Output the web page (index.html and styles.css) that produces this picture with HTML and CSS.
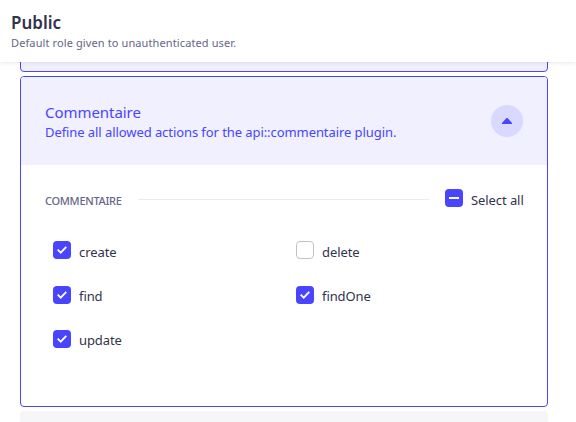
FILE: index.html
```html
<!DOCTYPE html>
<html lang="fr">
<head>
<meta charset="utf-8">
<title>Public</title>
<link rel="stylesheet" href="styles.css">
</head>
<body>
<header class="page-header">
  <h1 class="title">Public</h1>
  <p class="subtitle">Default role given to unauthenticated user.</p>
</header>
<main class="panels">
  <section class="panel panel-previous"></section>
  <section class="panel panel-open">
    <div class="panel-head">
      <div>
        <h2 class="panel-title">Commentaire</h2>
        <p class="panel-text">Define all allowed actions for the api::commentaire plugin.</p>
      </div>
      <button class="toggle" aria-label="Collapse"><svg width="10" height="6" viewBox="0 0 10 6"><path d="M0 6V5L4.5 0h1L10 5v1z" fill="#4945ff"/></svg></button>
    </div>
    <div class="panel-body">
      <div class="group-head">
        <h3 class="group-title">COMMENTAIRE</h3>
        <span class="rule"></span>
        <label class="option"><span class="box checked"><svg width="18" height="18" viewBox="0 0 18 18"><path d="M4 8h10v2H4z" fill="#fff"/></svg></span><span class="label label-all">Select all</span></label>
      </div>
      <div class="options">
        <label class="option"><span class="box checked"><svg width="18" height="18" viewBox="0 0 18 18"><path d="M4.7 8.7l3 3 5.6-5.9" fill="none" stroke="#fff" stroke-width="1.8"/></svg></span><span class="label">create</span></label>
        <label class="option"><span class="box"></span><span class="label">delete</span></label>
        <label class="option"><span class="box checked"><svg width="18" height="18" viewBox="0 0 18 18"><path d="M4.7 8.7l3 3 5.6-5.9" fill="none" stroke="#fff" stroke-width="1.8"/></svg></span><span class="label label-high">find</span></label>
        <label class="option"><span class="box checked"><svg width="18" height="18" viewBox="0 0 18 18"><path d="M4.7 8.7l3 3 5.6-5.9" fill="none" stroke="#fff" stroke-width="1.8"/></svg></span><span class="label label-high">findOne</span></label>
        <label class="option"><span class="box checked"><svg width="18" height="18" viewBox="0 0 18 18"><path d="M4.7 8.7l3 3 5.6-5.9" fill="none" stroke="#fff" stroke-width="1.8"/></svg></span><span class="label label-high">update</span></label>
      </div>
    </div>
  </section>
  <section class="panel panel-next"></section>
</main>
</body>
</html>
```
FILE: styles.css
```css
* { box-sizing: border-box; }
body {
  margin: 0;
  height: 422px;
  overflow: hidden;
  background: #fff;
  color: #32324d;
  font-family: "Noto Sans", "Open Sans", sans-serif;
}
h1, h2, h3, p { margin: 0; white-space: nowrap; }
svg { display: block; }
.page-header {
  position: relative;
  z-index: 1;
  height: 62px;
  padding: 12px 11px 0;
  background: #fff;
  box-shadow: 0 1px 4px rgba(33, 33, 52, .1);
}
.title { font-size: 17px; font-weight: 600; line-height: 22px; }
.subtitle { font-size: 11px; line-height: 18px; color: #666687; letter-spacing: .11px; }
.panels { display: flex; flex-direction: column; gap: 4px; padding: 0 28px 0 20px; }
.panel { flex: none; border: 1px solid #4945ff; border-radius: 4px; overflow: hidden; }
.panel-previous { height: 20px; margin-top: -10px; background: #f0f0ff; }
.panel-open { height: 331px; }
.panel-next { height: 20px; background: #f6f6f9; border-color: #f6f6f9; }
.panel-head {
  display: flex;
  justify-content: space-between;
  align-items: center;
  height: 88px;
  padding: 0 24px;
  background: #f0f0ff;
  color: #4945ff;
}
.panel-title { font-size: 15px; font-weight: 400; line-height: 20px; letter-spacing: -.05px; }
.panel-text { padding-top: 1px; font-size: 13px; line-height: 18px; letter-spacing: -.075px; }
.toggle {
  display: flex;
  align-items: center;
  justify-content: center;
  width: 32px;
  height: 32px;
  padding: 0;
  border: 0;
  border-radius: 50%;
  background: #d9d8ff;
}
.panel-body { padding: 24px; }
.group-head { display: flex; align-items: center; height: 18px; }
.group-title { width: 77px; padding-top: 6px; font-size: 11px; font-weight: 500; line-height: 16px; color: #666687; letter-spacing: -.3px; }
.rule { flex: 1; height: 1px; margin: 2px 16px 0; background: #eaeaef; }
.option { display: flex; align-items: center; gap: 8px; height: 18px; }
.box { flex: none; width: 18px; height: 18px; border: 1px solid #c0c0cf; border-radius: 4px; background: #fff; }
.checked { border: 0; background: #4945ff; }
.label { font-size: 13px; line-height: 18px; padding-top: 4px; margin-top: -1px; white-space: nowrap; letter-spacing: -.08px; }
.label-high { padding-top: 2px; }
.label-all { width: 52px; }
.options { display: grid; grid-template-columns: 243px 1fr; grid-template-rows: 45px 44px 18px; padding: 34px 8px 0; }
```
